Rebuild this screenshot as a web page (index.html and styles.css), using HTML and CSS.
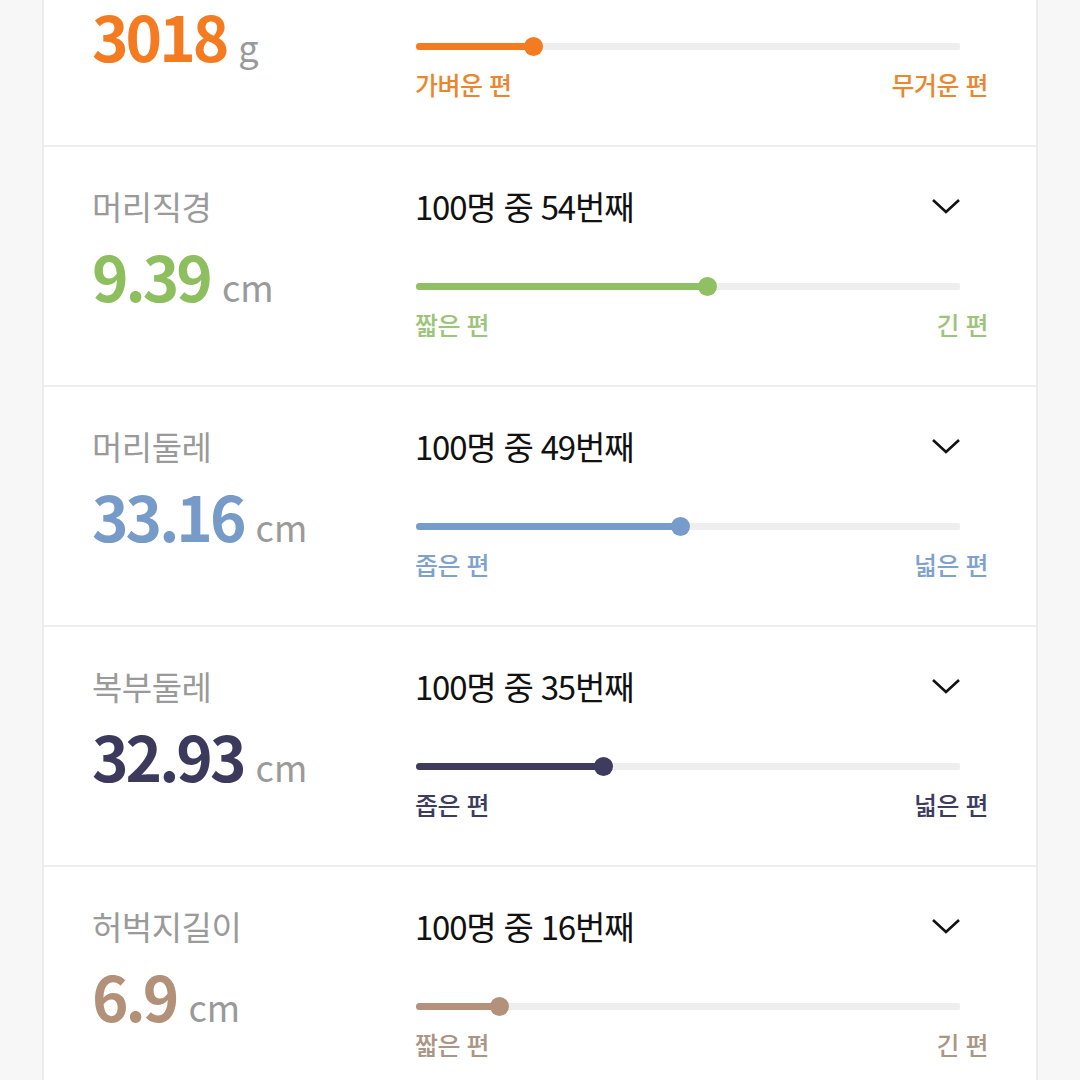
FILE: index.html
```html
<!DOCTYPE html>
<html lang="ko">
<head>
    <meta charset="UTF-8">
    <meta name="viewport" content="width=device-width, initial-scale=1.0">
    <title>성장 기록</title>
    <link rel="stylesheet" href="styles.css">
</head>
<body>

<div class="stat-card">
    <div class="stat-row orange">
        <div class="stat-left">
            <div class="stat-label">몸무게</div>
            <div class="stat-value">3018<span class="stat-unit">g</span></div>
        </div>
        <div class="stat-right">
            <div class="stat-rank">
                <span>100명 중 22번째</span>
                <svg class="chevron" width="30" height="16" viewBox="0 0 30 16"><path d="M2 2 L15 14 L28 2" fill="none" stroke="#111" stroke-width="2.6"/></svg>
            </div>
            <div class="stat-track"><div class="stat-fill" style="width: 21.5%"></div></div>
            <div class="stat-ends"><span>가벼운 편</span><span>무거운 편</span></div>
        </div>
    </div>

    <div class="stat-row green">
        <div class="stat-left">
            <div class="stat-label">머리직경</div>
            <div class="stat-value">9.39<span class="stat-unit">cm</span></div>
        </div>
        <div class="stat-right">
            <div class="stat-rank">
                <span>100명 중 54번째</span>
                <svg class="chevron" width="30" height="16" viewBox="0 0 30 16"><path d="M2 2 L15 14 L28 2" fill="none" stroke="#111" stroke-width="2.6"/></svg>
            </div>
            <div class="stat-track"><div class="stat-fill" style="width: 53.5%"></div></div>
            <div class="stat-ends"><span>짧은 편</span><span>긴 편</span></div>
        </div>
    </div>

    <div class="stat-row blue">
        <div class="stat-left">
            <div class="stat-label">머리둘레</div>
            <div class="stat-value">33.16<span class="stat-unit">cm</span></div>
        </div>
        <div class="stat-right">
            <div class="stat-rank">
                <span>100명 중 49번째</span>
                <svg class="chevron" width="30" height="16" viewBox="0 0 30 16"><path d="M2 2 L15 14 L28 2" fill="none" stroke="#111" stroke-width="2.6"/></svg>
            </div>
            <div class="stat-track"><div class="stat-fill" style="width: 48.5%"></div></div>
            <div class="stat-ends"><span>좁은 편</span><span>넓은 편</span></div>
        </div>
    </div>

    <div class="stat-row navy">
        <div class="stat-left">
            <div class="stat-label">복부둘레</div>
            <div class="stat-value">32.93<span class="stat-unit">cm</span></div>
        </div>
        <div class="stat-right">
            <div class="stat-rank">
                <span>100명 중 35번째</span>
                <svg class="chevron" width="30" height="16" viewBox="0 0 30 16"><path d="M2 2 L15 14 L28 2" fill="none" stroke="#111" stroke-width="2.6"/></svg>
            </div>
            <div class="stat-track"><div class="stat-fill" style="width: 34.3%"></div></div>
            <div class="stat-ends"><span>좁은 편</span><span>넓은 편</span></div>
        </div>
    </div>

    <div class="stat-row tan">
        <div class="stat-left">
            <div class="stat-label">허벅지길이</div>
            <div class="stat-value">6.9<span class="stat-unit">cm</span></div>
        </div>
        <div class="stat-right">
            <div class="stat-rank">
                <span>100명 중 16번째</span>
                <svg class="chevron" width="30" height="16" viewBox="0 0 30 16"><path d="M2 2 L15 14 L28 2" fill="none" stroke="#111" stroke-width="2.6"/></svg>
            </div>
            <div class="stat-track"><div class="stat-fill" style="width: 15.3%"></div></div>
            <div class="stat-ends"><span>짧은 편</span><span>긴 편</span></div>
        </div>
    </div>
</div>

</body>
</html>
```

FILE: styles.css
```css
body {
    font-family: "Noto Sans CJK KR", "Noto Sans", sans-serif;
    margin: 0;
    background-color: #f7f7f7;
}
.stat-card {
    margin: -93px 42px 0;
    background-color: #fff;
    border-left: 2px solid #ebebeb;
    border-right: 2px solid #ebebeb;
}
.stat-row {
    display: grid;
    grid-template-columns: 323px 1fr;
    height: 240px;
    padding: 39px 48px 0;
    box-sizing: border-box;
    border-bottom: 2px solid #eeeeee;
}
.stat-label {
    font-size: 33px;
    line-height: 40px;
    color: #9a9a9a;
    letter-spacing: -0.5px;
}
.stat-value {
    margin-top: 14px;
    font-size: 62px;
    line-height: 70px;
    font-weight: 700;
    letter-spacing: -3px;
}
.stat-unit {
    margin-left: 12px;
    font-size: 36px;
    font-weight: 400;
    letter-spacing: 0;
    color: #9a9a9a;
}
.stat-rank {
    display: flex;
    justify-content: space-between;
    align-items: center;
    height: 40px;
    padding-right: 27px;
    font-size: 33px;
    color: #111;
    letter-spacing: -1.2px;
}
.stat-track {
    position: relative;
    margin: 57px 28px 0 1px;
    height: 7px;
    border-radius: 2px;
    background-color: #eeeeee;
}
.stat-fill {
    position: relative;
    height: 100%;
    border-radius: 4px 0 0 4px;
}
.stat-fill::after {
    content: "";
    position: absolute;
    right: -10px;
    top: -6px;
    width: 19px;
    height: 19px;
    border-radius: 50%;
    background-color: inherit;
}
.stat-ends {
    display: flex;
    justify-content: space-between;
    margin-top: 19px;
    font-size: 25px;
    line-height: 30px;
    font-weight: 500;
    letter-spacing: -0.5px;
}

.orange .stat-value { color: #f47b20; }
.orange .stat-fill { background-color: #f47b20; }
.orange .stat-ends { color: #e9872f; }

.green .stat-value { color: #8dbf5f; }
.green .stat-fill { background-color: #8fc063; }
.green .stat-ends { color: #9cc47a; }

.blue .stat-value { color: #769bc9; }
.blue .stat-fill { background-color: #779ccb; }
.blue .stat-ends { color: #7fa2cc; }

.navy .stat-value { color: #3c3a5c; }
.navy .stat-fill { background-color: #3d3b5e; }
.navy .stat-ends { color: #3d3b5e; }

.tan .stat-value { color: #b39179; }
.tan .stat-fill { background-color: #b3917a; }
.tan .stat-ends { color: #ab9585; }
```
